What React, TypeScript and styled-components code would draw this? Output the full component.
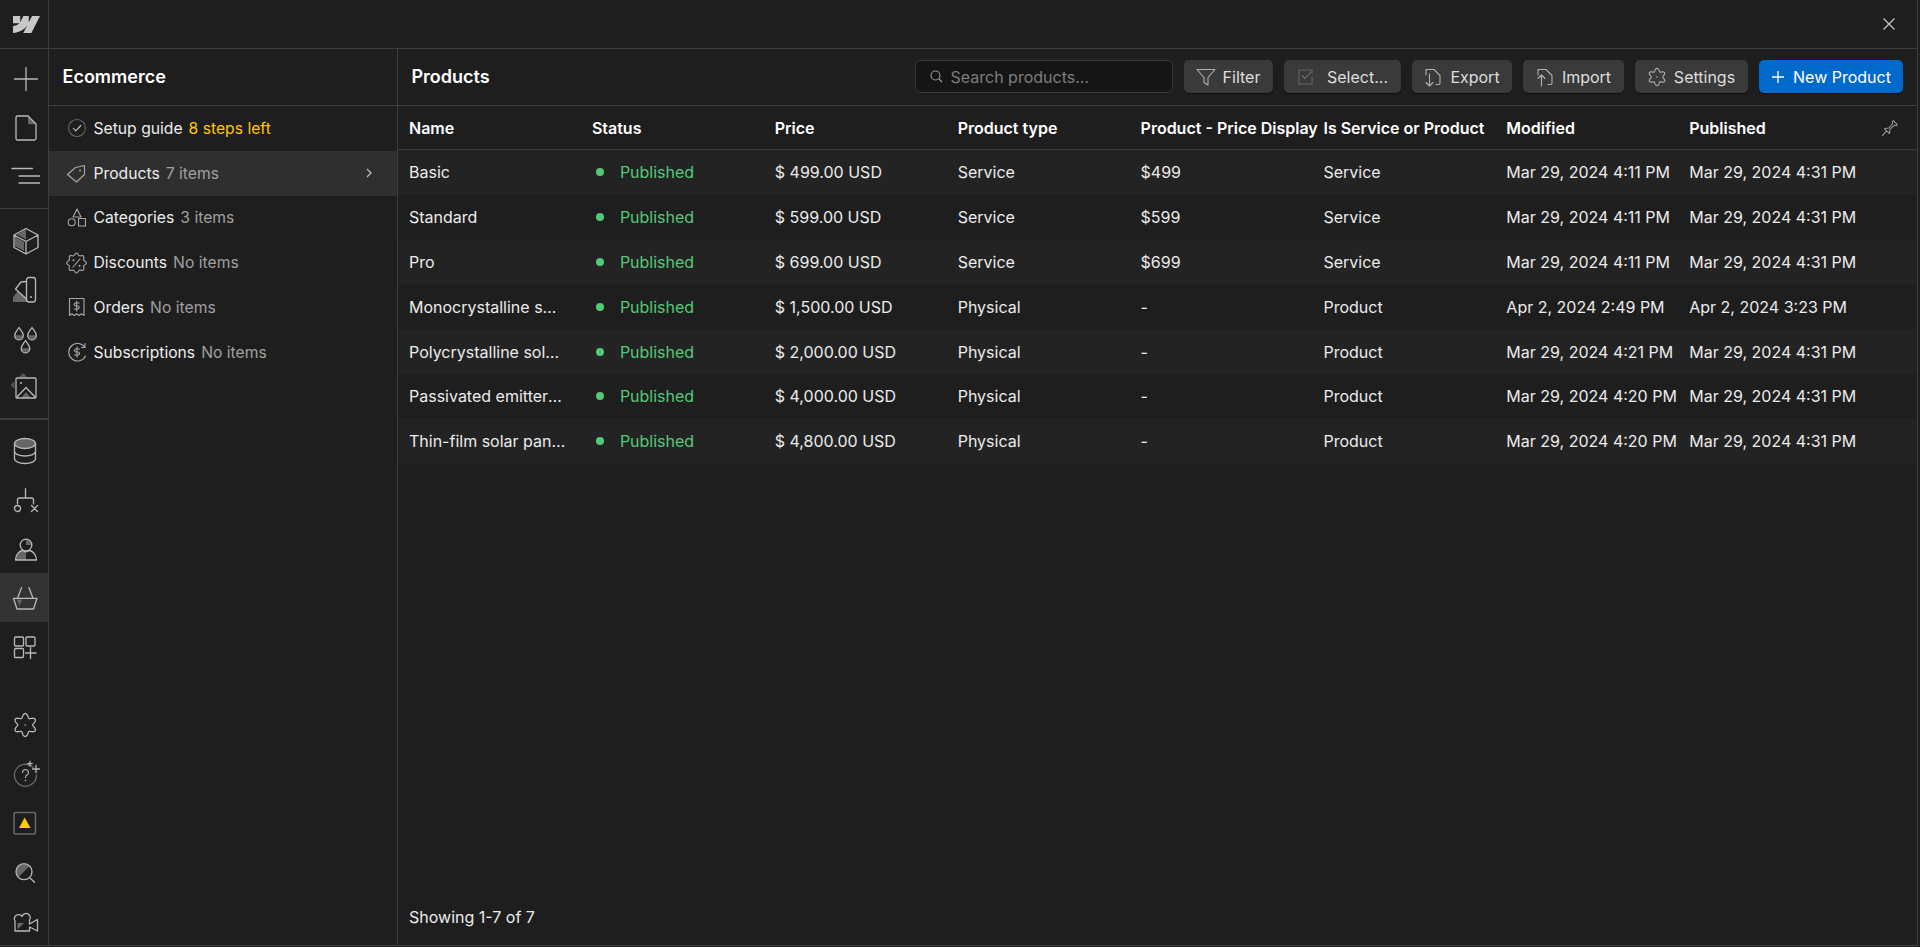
import React from "react";
import styled, { createGlobalStyle } from "styled-components";

const Global = createGlobalStyle`
  html, body { margin: 0; padding: 0; background: #1e1e1e; overflow: hidden; }
  body { font-family: Inter, "Noto Sans", sans-serif; color: #f0f0f0; font-size: 16px; }
  * { box-sizing: border-box; }
`;

const LINE = "#3d3d3d";
const ST = "#b9b9b9";
const FILL = "#666666";

const Frame = styled.div`
  width: 1918px; height: 946px; display: flex; flex-direction: column;
  border-right: 1px solid ${LINE}; border-bottom: 1px solid ${LINE};
`;
const TopBar = styled.header`
  height: 49px; flex: none; display: flex; align-items: center; justify-content: space-between;
  border-bottom: 1px solid ${LINE}; padding-right: 21px;
`;
const LogoCell = styled.div`
  width: 49px; height: 48px; display: flex; align-items: center; justify-content: center;
  border-right: 1px solid ${LINE}; padding-left: 4px;
`;
const Body = styled.div`flex: 1; min-height: 0; display: flex;`;
const Rail = styled.nav`
  width: 49px; flex: none; border-right: 1px solid ${LINE}; display: flex; flex-direction: column;
  padding-top: 5.5px;
`;
const RailGroup = styled.div<{ $pad?: number }>`
  display: flex; flex-direction: column; padding-top: ${p => p.$pad ?? 0}px;
`;
const RailRule = styled.div<{ $h?: number }>`
  height: ${p => p.$h ?? 1}px; background: ${LINE}; margin-top: 6px; flex: none;
`;
const RailBottom = styled.div`margin-top: auto; display: flex; flex-direction: column;`;
const RailItem = styled.div<{ $active?: boolean }>`
  height: 49px; flex: none; display: flex; align-items: center; padding-left: 11.5px;
  background: ${p => (p.$active ? "#333333" : "transparent")};
  svg { overflow: visible; display: block; }
`;
const Sidebar = styled.aside`
  width: 349px; flex: none; border-right: 1px solid ${LINE}; display: flex; flex-direction: column;
`;
const PanelHead = styled.div`
  height: 57px; flex: none; border-bottom: 1px solid ${LINE}; display: flex; align-items: center;
`;
const SideTitle = styled.h2`margin: -1px 0 0 13.5px; font-size: 18px; font-weight: 600; color: #fff;`;
const SideList = styled.div`display: flex; flex-direction: column; font-size: 15.7px;`;
const SideRow = styled.div<{ $active?: boolean }>`
  height: 44.76px; display: flex; align-items: center; padding: 0 23.5px 0 17px;
  background: ${p => (p.$active ? "#2f2f2f" : "transparent")};
  svg { flex: none; overflow: visible; }
`;
const SideLabel = styled.span`margin-left: 5.5px; color: #ececec;`;
const SideMeta = styled.span<{ $warn?: boolean }>`
  margin-left: 6px; color: ${p => (p.$warn ? "#ffc700" : "#a0a0a0")};
`;
const Chevron = styled.svg`margin-left: auto;`;
const Main = styled.main`flex: 1; min-width: 0; display: flex; flex-direction: column;`;
const Toolbar = styled(PanelHead)`justify-content: space-between; padding: 0 14px 1px 13.5px;`;
const MainTitle = styled.h1`margin: 0; font-size: 18px; font-weight: 600; color: #fff;`;
const Tools = styled.div`display: flex; align-items: center; gap: 11px;`;
const Search = styled.div`
  width: 258px; height: 33px; background: #151515; border: 1px solid #383838; border-radius: 5px;
  display: flex; align-items: center; gap: 7.5px; padding-left: 14px; color: #7d7d7d;
`;
const Btn = styled.button<{ $w: number; $primary?: boolean }>`
  width: ${p => p.$w}px; height: 33px; border: 0; border-radius: 5px; padding: 0;
  display: flex; align-items: center; justify-content: center; gap: 8px;
  font: inherit; color: ${p => (p.$primary ? "#fff" : "#dedede")};
  background: ${p => (p.$primary ? "#006acc" : "#3a3a3a")};
  box-shadow: 0 1px 1px rgba(0,0,0,.5);
`;
const SelectLabel = styled.span`margin-left: 4px;`;
const Grid = styled.div`
  display: grid; grid-template-columns: repeat(8, 182.9px) 1fr; align-items: center;
`;
const HeadRow = styled(Grid)`height: 44px; border-bottom: 1px solid ${LINE}; flex: none;`;
const HeadCell = styled.div`padding-left: 11px; font-weight: 600; color: #fff; white-space: nowrap;`;
const PinCell = styled.div`display: flex; justify-content: flex-end; padding-right: 18px;`;
const Row = styled(Grid)<{ $alt: boolean }>`
  height: 44.8px; flex: none; background: ${p => (p.$alt ? "#232323" : "transparent")};
`;
const Cell = styled.div`padding-left: 11px; color: #ececec; white-space: nowrap;`;
const NameCell = styled.div<{ $w: number }>`
  margin-left: 11px; width: ${p => p.$w}px; color: #ececec; white-space: nowrap; overflow: hidden; text-overflow: ellipsis;
`;
const StatusCell = styled.div`
  padding-left: 15px; display: flex; align-items: center; gap: 16px; color: #55c878;
  &::before { content: ""; width: 8px; height: 8px; border-radius: 50%; background: #55c878; }
`;
const Footer = styled.div`margin-top: auto; height: 38px; padding-left: 11px; color: #ececec; line-height: 20px;`;
const PlainSvg = styled.svg`overflow: visible; flex: none;`;

const S = { fill: "none", stroke: ST, strokeWidth: 1.3, strokeLinejoin: "round" as const, strokeLinecap: "round" as const };

function lobes(cx: number, cy: number, r: number, a: number, n: number) {
  const pts: string[] = [];
  for (let i = 0; i <= 120; i++) {
    const t = (i / 120) * Math.PI * 2;
    const rr = r + a * Math.cos(n * t);
    pts.push(`${(cx + rr * Math.sin(t)).toFixed(2)} ${(cy - rr * Math.cos(t)).toFixed(2)}`);
  }
  return "M" + pts.join("L") + "Z";
}

const R = ({ children }: { children: React.ReactNode }) => (
  <svg width="28" height="28" viewBox="0 0 28 28" {...S}>{children}</svg>
);
const Drop = ({ x, y }: { x: number; y: number }) => (
  <g transform={`translate(${x} ${y})`}>
    <path d="M-3.8 1.2A3.8 3.8 0 0 0 3.8 1.2Z" fill={FILL} stroke="none" />
    <path d="M0-6.5C1.6-3.8 4.3-1.5 4.3 1.5A4.3 4.3 0 0 1-4.3 1.5C-4.3-1.5-1.6-3.8 0-6.5Z" />
  </g>
);

const railTop = [
  <R><path d="M14 2.5v23M2.5 14h23" /></R>,
  <R><path d="M16 2.2v8h8z" fill={FILL} stroke="none" /><path d="M5.5 2h10.5l8 8v14.5a1.5 1.5 0 0 1-1.5 1.5h-17A1.5 1.5 0 0 1 4 24.500V3.500A1.500 1.500 0 0 1 5.500 2z" /></R>,
  <R><path d="M0 5.500h20.500M7 13h20.500M7 20h20.500" /></R>,
];
const railAssets = [
  <R>
    <path d="M14 2.500L5 7.500l9 5z M3 9.500l9 5.500v9L3 19z" fill={FILL} stroke="none" />
    <path d="M14 1.500l12 6.500v12.500L14 27 2 20.500V8zM2 8l12 6.500L26 8M14 14.500V27" />
  </R>,
  <R>
    <path d="M1 26v-5l5-6 11 11z" fill={FILL} stroke="none" />
    <rect x="14.500" y="1.500" width="9" height="24.500" rx="2.500" />
    <circle cx="19" cy="21" r="1" fill={ST} stroke="none" />
    <path d="M14.500 5.500L9 6 3.500 13l11 10" />
  </R>,
  <R><Drop x={7} y={9} /><Drop x={20} y={9} /><Drop x={13.500} y={22} /></R>,
  <R>
    <path d="M7 3l4-4 4 4zM2.500 7v8l-4-4z" fill="#555" stroke="none" />
    <path d="M9 24l5-6 5 6z" fill={FILL} stroke="none" />
    <rect x="4" y="4" width="20" height="20" rx="1" />
    <circle cx="9" cy="9" r="1" fill={ST} stroke="none" />
    <path d="M4.500 23.500l9.500-10 9.500 10" />
  </R>,
];
const railData = [
  <R>
    <ellipse cx="13" cy="6.500" rx="10.500" ry="5" fill={FILL} />
    <path d="M2.500 6.500v15c0 3 4.700 5 10.500 5s10.500-2 10.500-5v-15M2.500 14c0 3 4.700 5 10.500 5s10.500-2 10.500-5" />
  </R>,
  <R>
    <path d="M13.500 2.700V12M5.500 18v-4a2 2 0 0 1 2-2h12a2 2 0 0 1 2 2v4" />
    <circle cx="5.500" cy="22.500" r="3" />
    <path d="M19.500 19.500l6 6M25.500 19.500l-6 6" />
  </R>,
  <R>
    <path d="M14 17v8H4c0-4 3-8 6.500-9 1 .7 2.500 1 3.500 1z M14 5a5 5 0 0 1 5 5h-5z" fill={FILL} stroke="none" />
    <circle cx="14" cy="10" r="5.800" />
    <path d="M3.500 25c0-5 3.500-9 7-9.500 2 1.500 5 1.500 7 0 3.500.5 7 4.500 7 9.500z" />
  </R>,
  <R>
    <path d="M5 15.500h5L7.500 22z" fill={FILL} stroke="none" />
    <path d="M9.500 3.700L5.500 14.300M17 3.700L21 14.300M1.500 14.300H25L21.500 25H5z" />
  </R>,
  <R>
    <rect x="2.500" y="4" width="9" height="9" rx="1" />
    <rect x="14" y="4" width="9" height="9" rx="1" />
    <rect x="2.500" y="15.500" width="9" height="9" rx="1" />
    <path d="M18.500 14.500v11M13.500 20h10.500" />
  </R>,
];
const railFoot = [
  <R><path d={lobes(13.200, 14, 9.500, 2, 6)} /><circle cx="13.200" cy="14" r=".8" fill={ST} stroke="none" /></R>,
  <R>
    <path d="M21 7.200A11 11 0 1 0 24.500 15" stroke="#6a6a6a" />
    <path d="M24 5.500v7M20.500 9h7M18 1.500v4.500M15.800 3.700h4.400" />
    <path d="M10.500 12.500a3 3 0 1 1 4.500 2.600c-1 .6-1.500 1.200-1.500 2.400" strokeWidth="1.100" />
    <circle cx="13.500" cy="20.500" r=".8" fill={ST} stroke="none" />
  </R>,
  <R>
    <rect x="2" y="3.500" width="21.500" height="21.500" rx="1.500" stroke="#6a6a6a" strokeWidth="1.500" />
    <path d="M7 19L12.700 8.500 18.500 19z" fill="#ffcc00" stroke="none" />
  </R>,
  <R>
    <path d="M6.400 19.300A8 8 0 0 1 17.700 8z" fill={FILL} stroke="none" />
    <circle cx="12" cy="13.700" r="8" />
    <path d="M18 20l4.500 4.300" />
  </R>,
  <R>
    <path d="M5.500 16h6.500l-6.500 6.500z" fill={FILL} stroke="none" />
    <path d="M3 24V14A4 4 0 1 1 10 9.500A4.200 4.200 0 1 1 17.500 13V17L25.500 12.500V24L17.500 20V24Z" />
  </R>,
];

const SS = { fill: "none", stroke: "#a8a8a8", strokeWidth: 1.1, strokeLinejoin: "round" as const, strokeLinecap: "round" as const };
const Ic = ({ children }: { children: React.ReactNode }) => (
  <svg width="22" height="22" viewBox="0 0 22 22" {...SS}>{children}</svg>
);
const Dollar = ({ x, y }: { x: number; y: number }) => (
  <path transform={`translate(${x} ${y})`} d="M2.500-3H-1a1.500 1.500 0 0 0 0 3H1a1.500 1.500 0 0 1 0 3h-3.500M0-5V5" />
);

const sideItems = [
  { label: "Setup guide", meta: "8 steps left", warn: true, icon: <Ic><circle cx="11" cy="11" r="8.500" stroke="#666" /><path d="M7.300 11.300l2.500 2.500 5-5.300" stroke="#c0c0c0" /></Ic> },
  { label: "Products", meta: "7 items", active: true, icon: <Ic><path d="M1.500 12.500L9.500 5.500 18.500 3.500V12.500L10.500 20z" /><circle cx="14" cy="8.500" r=".9" fill="#a8a8a8" stroke="none" /></Ic> },
  { label: "Categories", meta: "3 items", icon: <Ic><path d="M7 10l4-8 4 8z" /><circle cx="5.700" cy="15.300" r="3.500" /><rect x="12.500" y="11.500" width="7" height="7.500" /></Ic> },
  { label: "Discounts", meta: "No items", icon: <Ic><path d={lobes(10.500, 11, 8.800, 1, 8)} /><path d="M7 15l7-8" /><circle cx="7.500" cy="8.300" r="1" fill="#a8a8a8" stroke="none" /><circle cx="13.500" cy="13.800" r="1" fill="#a8a8a8" stroke="none" /></Ic> },
  { label: "Orders", meta: "No items", icon: <Ic><path d="M3.500 2.500h14.500v17l-2.400-1.800-2.400 1.800-2.400-1.800-2.400 1.800-2.500-1.800-2.400 1.800z" /><Dollar x={10.700} y={10} /></Ic> },
  { label: "Subscriptions", meta: "No items", icon: <Ic><path d="M19 6.500A8.800 8.800 0 1 0 19.500 15" /><path d="M19 2.500v4h-3.500" /><Dollar x={11} y={11} /></Ic> },
];

const T = { fill: "none", stroke: "#b0b0b0", strokeWidth: 1.100, strokeLinejoin: "round" as const, strokeLinecap: "round" as const };
const Tb = ({ children }: { children: React.ReactNode }) => (
  <PlainSvg width="18" height="18" viewBox="0 0 18 18" {...T}>{children}</PlainSvg>
);

const cols = ["Name", "Status", "Price", "Product type", "Product - Price Display", "Is Service or Product", "Modified", "Published"];
const rows: { w: number; v: string[] }[] = [
  { w: 157, v: ["Basic", "$ 499.00 USD", "Service", "$499", "Service", "Mar 29, 2024 4:11 PM", "Mar 29, 2024 4:31 PM"] },
  { w: 157, v: ["Standard", "$ 599.00 USD", "Service", "$599", "Service", "Mar 29, 2024 4:11 PM", "Mar 29, 2024 4:31 PM"] },
  { w: 157, v: ["Pro", "$ 699.00 USD", "Service", "$699", "Service", "Mar 29, 2024 4:11 PM", "Mar 29, 2024 4:31 PM"] },
  { w: 154, v: ["Monocrystalline solar panels", "$ 1,500.00 USD", "Physical", "-", "Product", "Apr 2, 2024 2:49 PM", "Apr 2, 2024 3:23 PM"] },
  { w: 157, v: ["Polycrystalline solar panels", "$ 2,000.00 USD", "Physical", "-", "Product", "Mar 29, 2024 4:21 PM", "Mar 29, 2024 4:31 PM"] },
  { w: 154, v: ["Passivated emitter solar panels", "$ 4,000.00 USD", "Physical", "-", "Product", "Mar 29, 2024 4:20 PM", "Mar 29, 2024 4:31 PM"] },
  { w: 157.6, v: ["Thin-film solar panels", "$ 4,800.00 USD", "Physical", "-", "Product", "Mar 29, 2024 4:20 PM", "Mar 29, 2024 4:31 PM"] },
];

export default function App() {
  return (
    <Frame>
      <Global />
      <TopBar>
        <LogoCell>
          <svg width="27" height="27" viewBox="0 0 24 24" fill="#c8c8c8">
            <path d="m24 4.515-7.658 14.97H9.149l3.205-6.204h-.144C9.566 16.713 5.621 18.973 0 19.485v-6.118s3.596-.213 5.71-2.435H0V4.515h6.417v5.278l.144-.001 2.622-5.277h4.854v5.244h.144l2.720-5.244H24Z" />
          </svg>
        </LogoCell>
        <svg width="14" height="14" viewBox="0 0 14 14" fill="none" stroke="#c8c8c8" strokeWidth="1.200"><path d="M1.500 1.500l11 11M12.500 1.500l-11 11" /></svg>
      </TopBar>
      <Body>
        <Rail>
          <RailGroup>{railTop.map((c, i) => <RailItem key={i}>{c}</RailItem>)}<RailRule /></RailGroup>
          <RailGroup $pad={7.5}>{railAssets.map((c, i) => <RailItem key={i}>{c}</RailItem>)}<RailRule $h={2} /></RailGroup>
          <RailGroup $pad={6}>{railData.map((c, i) => <RailItem key={i} $active={i === 3}>{c}</RailItem>)}</RailGroup>
          <RailBottom>{railFoot.map((c, i) => <RailItem key={i}>{c}</RailItem>)}</RailBottom>
        </Rail>
        <Sidebar>
          <PanelHead><SideTitle>Ecommerce</SideTitle></PanelHead>
          <SideList>
            {sideItems.map(it => (
              <SideRow key={it.label} $active={it.active}>
                {it.icon}
                <SideLabel>{it.label}</SideLabel>
                <SideMeta $warn={it.warn}>{it.meta}</SideMeta>
                {it.active && (
                  <Chevron width="10" height="12" viewBox="0 0 10 12" fill="none" stroke="#c0c0c0" strokeWidth="1.200"><path d="M3 2l4 4-4 4" /></Chevron>
                )}
              </SideRow>
            ))}
          </SideList>
        </Sidebar>
        <Main>
          <Toolbar>
            <MainTitle>Products</MainTitle>
            <Tools>
              <Search>
                <svg width="13" height="13" viewBox="0 0 13 13" fill="none" stroke="#9a9a9a" strokeWidth="1.100"><circle cx="5.500" cy="5.500" r="4.500" /><path d="M9 9l3 3" /></svg>
                Search products...
              </Search>
              <Btn $w={89}>
                <Tb><path d="M0 1.500h18L11 9.500V17l-4-2.500V9.500z" /></Tb>Filter
              </Btn>
              <Btn $w={117}>
                <Tb><path d="M15 4.500V2H2v14h13V9" stroke="#666" /><path d="M5.500 8l2.500 2.500L14 4" stroke="#777" /></Tb><SelectLabel>Select...</SelectLabel>
              </Btn>
              <Btn $w={100}>
                <Tb><path d="M2 7V1.500h8l6 6V15a1.500 1.500 0 0 1-1.500 1.500H12" /><path d="M5.500 6v12M2 14.500l3.500 3.500 3.500-3.500" /></Tb>Export
              </Btn>
              <Btn $w={101}>
                <Tb><path d="M2 7V1.500h8l6 6V15a1.500 1.500 0 0 1-1.500 1.500H12" /><path d="M5.500 18V7M2 10.500l3.500-3.500 3.500 3.500" /></Tb>Import
              </Btn>
              <Btn $w={113}>
                <Tb><path d={lobes(9, 9, 7.200, 1.500, 6)} /><circle cx="9" cy="9" r=".8" fill="#b0b0b0" stroke="none" /></Tb>Settings
              </Btn>
              <Btn $w={144} $primary>
                <svg width="14" height="14" viewBox="0 0 14 14" fill="none" stroke="#fff" strokeWidth="1.300"><path d="M7 1v12M1 7h12" /></svg>New Product
              </Btn>
            </Tools>
          </Toolbar>
          <HeadRow>
            {cols.map(c => <HeadCell key={c}>{c}</HeadCell>)}
            <PinCell>
              <svg width="18" height="18" viewBox="0 0 16 16" fill="none" stroke="#969696" strokeWidth="1" strokeLinejoin="round"><path d="M1 15l4-4.500M3 8.500L7 8l3.500-4L10 2.500 11 1.500 14.500 5 13.500 6 12 5.500 8 9l-.5 4z" /></svg>
            </PinCell>
          </HeadRow>
          {rows.map((r, i) => (
            <Row key={r.v[0]} $alt={i % 2 === 0}>
              <NameCell $w={r.w}>{r.v[0]}</NameCell>
              <StatusCell>Published</StatusCell>
              {r.v.slice(1).map((v, j) => <Cell key={j}>{v}</Cell>)}
            </Row>
          ))}
          <Footer>Showing 1-7 of 7</Footer>
        </Main>
      </Body>
    </Frame>
  );
}
